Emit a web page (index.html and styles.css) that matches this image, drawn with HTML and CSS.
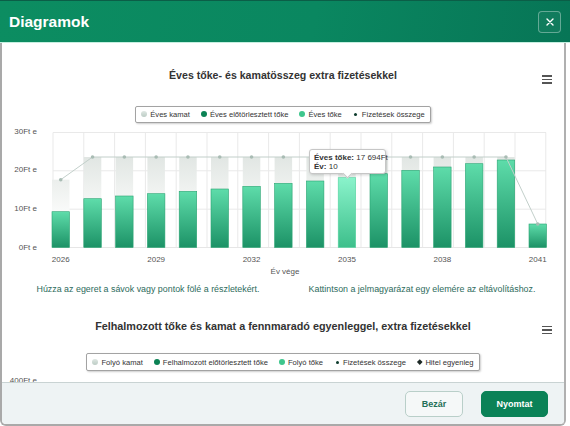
FILE: index.html
```html
<!DOCTYPE html>
<html lang="hu">
<head>
<meta charset="utf-8">
<title>Diagramok</title>
<link rel="stylesheet" href="styles.css">
</head>
<body>
<div class="modal">
  <header class="modal-header">
    <h1>Diagramok</h1>
    <button class="close" aria-label="Bezár">
      <svg width="10" height="10" viewBox="0 0 10 10"><path d="M2 2 L8 8 M8 2 L2 8" stroke="#fff" stroke-width="1.4" stroke-linecap="round" fill="none"/></svg>
    </button>
  </header>
  <div class="modal-frame">
    <main class="modal-body">
      <section class="chart chart-1">
        <div class="chart-head">
          <h2>Éves tőke- és kamatösszeg extra fizetésekkel</h2>
          <span class="menu"><i></i><i></i><i></i></span>
        </div>
        <div class="legend">
          <span class="li"><i class="sym sym-kamat"></i>Éves kamat</span>
          <span class="li"><i class="sym sym-elo"></i>Éves előtörlesztett tőke</span>
          <span class="li"><i class="sym sym-toke"></i>Éves tőke</span>
          <span class="li"><i class="sym sym-dot"></i>Fizetések összege</span>
        </div>
        <div class="plot">
          <svg class="plot-svg" width="562" height="152" viewBox="2 124 562 152">
            <defs>
              <linearGradient id="gb" x1="0" y1="0" x2="0" y2="1"><stop offset="0" stop-color="#5edcaa"/><stop offset="1" stop-color="#1c9266"/></linearGradient>
              <linearGradient id="gh" x1="0" y1="0" x2="0" y2="1"><stop offset="0" stop-color="#8af3cb"/><stop offset="1" stop-color="#3dbf8b"/></linearGradient>
              <linearGradient id="gk" gradientUnits="userSpaceOnUse" x1="0" y1="156" x2="0" y2="212"><stop offset="0" stop-color="#e1e6e3"/><stop offset="1" stop-color="#fafbfa"/></linearGradient>
            </defs>
            <g stroke="#e9e9e9" stroke-width="1" fill="none">
              <path d="M53 131.5H546M53 169.8H546M53 208.2H546"/>
              <path d="M53 131.5V246.5M83.8 131.5V246.5M114.6 131.5V246.5M145.4 131.5V246.5M176.2 131.5V246.5M207 131.5V246.5M237.8 131.5V246.5M268.6 131.5V246.5M299.4 131.5V246.5M330.2 131.5V246.5M361 131.5V246.5M391.8 131.5V246.5M422.6 131.5V246.5M453.4 131.5V246.5M484.2 131.5V246.5M515 131.5V246.5M545.8 131.5V246.5"/>
            </g>
            <g fill="url(#gk)">
              <rect x="52" y="178.7" width="17.5" height="32"/>
              <rect x="83.8" y="156" width="17.5" height="41.7"/>
              <rect x="115.6" y="156" width="17.5" height="39"/>
              <rect x="147.4" y="156" width="17.5" height="36.7"/>
              <rect x="179.2" y="156" width="17.5" height="34.3"/>
              <rect x="211" y="156" width="17.5" height="32"/>
              <rect x="242.8" y="156" width="17.5" height="29.3"/>
              <rect x="274.6" y="156" width="17.5" height="26.3"/>
              <rect x="306.4" y="156" width="17.5" height="24"/>
              <rect x="338.2" y="156" width="17.5" height="20.7"/>
              <rect x="370" y="156" width="17.5" height="16.7"/>
              <rect x="401.8" y="156" width="17.5" height="13.3"/>
              <rect x="433.6" y="156" width="17.5" height="10"/>
              <rect x="465.4" y="156" width="17.5" height="6.7"/>
              <rect x="497.2" y="156" width="17.5" height="3"/>
            </g>
            <path d="M53 246.5H546" stroke="#e6e6e6" stroke-width="1"/>
            <g fill="url(#gb)" stroke="#2aa472" stroke-width="0.6">
              <rect x="52" y="210.7" width="17.5" height="35.8"/>
              <rect x="83.8" y="197.7" width="17.5" height="48.8"/>
              <rect x="115.6" y="195" width="17.5" height="51.5"/>
              <rect x="147.4" y="192.7" width="17.5" height="53.8"/>
              <rect x="179.2" y="190.3" width="17.5" height="56.2"/>
              <rect x="211" y="188" width="17.5" height="58.5"/>
              <rect x="242.8" y="185.3" width="17.5" height="61.2"/>
              <rect x="274.6" y="182.3" width="17.5" height="64.2"/>
              <rect x="306.4" y="180" width="17.5" height="66.5"/>
              <rect x="338.2" y="176.7" width="17.5" height="69.8" fill="url(#gh)" stroke="#55d39f"/>
              <rect x="370" y="172.7" width="17.5" height="73.8"/>
              <rect x="401.8" y="169.3" width="17.5" height="77.2"/>
              <rect x="433.6" y="166" width="17.5" height="80.5"/>
              <rect x="465.4" y="162.7" width="17.5" height="83.8"/>
              <rect x="497.2" y="159" width="17.5" height="87.5"/>
              <rect x="529" y="223" width="17.5" height="23.5"/>
            </g>
            <polyline fill="none" stroke="#c2cfca" stroke-width="1" points="60.75,178.7 92.55,156 124.35,156 156.15,156 187.95,156 219.75,156 251.55,156 283.35,156 315.15,156 346.95,156 378.75,156 410.55,156 442.35,156 474.15,156 505.95,156 537.75,223"/>
            <g fill="#a9bcb4">
              <circle cx="60.75" cy="178.7" r="1.8"/><circle cx="92.55" cy="156" r="1.8"/><circle cx="124.35" cy="156" r="1.8"/><circle cx="156.15" cy="156" r="1.8"/>
              <circle cx="187.95" cy="156" r="1.8"/><circle cx="219.75" cy="156" r="1.8"/><circle cx="251.55" cy="156" r="1.8"/><circle cx="283.35" cy="156" r="1.8"/>
              <circle cx="315.15" cy="156" r="1.8"/><circle cx="346.95" cy="156" r="1.8"/><circle cx="378.75" cy="156" r="1.8"/><circle cx="410.55" cy="156" r="1.8"/>
              <circle cx="442.35" cy="156" r="1.8"/><circle cx="474.15" cy="156" r="1.8"/><circle cx="505.95" cy="156" r="1.8"/><circle cx="537.75" cy="223" r="1.8"/>
            </g>
            <g class="axis-text" text-anchor="end">
              <text x="37" y="132.5">30Ft e</text>
              <text x="37" y="170.8">20Ft e</text>
              <text x="37" y="209.6">10Ft e</text>
              <text x="37" y="249">0Ft e</text>
            </g>
            <g class="axis-text" text-anchor="middle">
              <text x="60.75" y="261">2026</text>
              <text x="156.15" y="261">2029</text>
              <text x="251.55" y="261">2032</text>
              <text x="346.95" y="261">2035</text>
              <text x="442.35" y="261">2038</text>
              <text x="537.75" y="261">2041</text>
              <text x="285" y="273">Év vége</text>
            </g>
          </svg>
          <div class="tooltip">
            <div><b>Éves tőke:</b> 17 694Ft</div>
            <div><b>Év:</b> 10</div>
          </div>
        </div>
      </section>
      <div class="hints">
        <p>Húzza az egeret a sávok vagy pontok fölé a részletekért.</p>
        <p>Kattintson a jelmagyarázat egy elemére az eltávolításhoz.</p>
      </div>
      <section class="chart chart-2">
        <div class="chart-head">
          <h2>Felhalmozott tőke és kamat a fennmaradó egyenleggel, extra fizetésekkel</h2>
          <span class="menu"><i></i><i></i><i></i></span>
        </div>
        <div class="legend legend-2">
          <span class="li"><i class="sym sym-kamat"></i>Folyó kamat</span>
          <span class="li"><i class="sym sym-elo"></i>Felhalmozott előtörlesztett tőke</span>
          <span class="li"><i class="sym sym-toke"></i>Folyó tőke</span>
          <span class="li"><i class="sym sym-dot"></i>Fizetések összege</span>
          <span class="li"><i class="sym sym-diamond"></i>Hitel egyenleg</span>
        </div>
        <div class="plot plot-2">
          <svg width="562" height="50" viewBox="2 374 562 50">
            <path d="M53 385.5H546" stroke="#e9e9e9" stroke-width="1"/>
            <text class="axis-text" x="37" y="385.5" text-anchor="end">400Ft e</text>
          </svg>
        </div>
      </section>
    </main>
    <footer class="modal-footer">
      <button class="btn btn-ghost">Bezár</button>
      <button class="btn btn-primary">Nyomtat</button>
    </footer>
  </div>
</div>
</body>
</html>
```

FILE: styles.css
```css
* { box-sizing: border-box; }
html, body { margin: 0; padding: 0; background: #fff; }
body {
  width: 570px;
  height: 426px;
  overflow: hidden;
  font-family: "Liberation Sans", Arial, Helvetica, sans-serif;
}
.modal {
  width: 570px;
  height: 426px;
  display: flex;
  flex-direction: column;
}
.modal-header {
  height: 43px;
  flex: none;
  display: flex;
  align-items: center;
  justify-content: space-between;
  padding: 0 9px;
  background: linear-gradient(100deg, #0c8d61 0%, #0a8760 55%, #077556 100%);
  border-top: 1px solid #0b5e47;
  border-bottom: 1px solid #c6efe0;
}
.modal-header h1 {
  margin: 0;
  font-size: 15.5px;
  font-weight: 700;
  color: #fff;
}
.close {
  width: 23px;
  height: 22px;
  padding: 0;
  border: 1px solid rgba(255, 255, 255, 0.35);
  border-radius: 4px;
  background: rgba(255, 255, 255, 0.04);
  display: flex;
  align-items: center;
  justify-content: center;
}
.modal-frame {
  flex: 1;
  min-height: 0;
  width: 566px;
  display: flex;
  flex-direction: column;
  border-left: 2px solid #a9a9a9;
  border-right: 2px solid #b0b0b0;
  border-bottom: 2px solid #a9a9a9;
  border-radius: 0 0 6px 6px;
  overflow: hidden;
}
.modal-body {
  flex: 1;
  min-height: 0;
  overflow: hidden;
  background: #fff;
}
.chart-head {
  display: grid;
  grid-template-columns: 1fr auto 1fr;
  padding-top: 25px;
}
.chart-head h2 {
  grid-column: 2;
  margin: 0;
  font-size: 10.6px;
  line-height: 14px;
  font-weight: 700;
  color: #333;
  white-space: nowrap;
}
.chart-2 .chart-head { padding-top: 24px; }
.chart-2 .chart-head h2 { font-size: 10.8px; }
.menu {
  grid-column: 3;
  justify-self: end;
  align-self: start;
  margin: 7px 12px 0 0;
  display: flex;
  flex-direction: column;
  gap: 2px;
  width: 10px;
}
.menu i {
  display: block;
  height: 1.5px;
  background: #555;
}
.legend {
  display: flex;
  align-items: center;
  gap: 11px;
  width: max-content;
  height: 17px;
  margin: 22px auto 0;
  padding: 0 5px;
  border: 1px solid #a3a3a3;
  border-radius: 2px;
  box-shadow: 1px 1px 2px rgba(0, 0, 0, 0.2);
  background: #fff;
  font-size: 7.6px;
  color: #333;
}
.legend-2 {
  height: 18px;
  margin-top: 19px;
}
.li {
  display: flex;
  align-items: center;
  gap: 3px;
  white-space: nowrap;
}
.sym {
  display: block;
  width: 6px;
  height: 6px;
  border-radius: 50%;
}
.sym-kamat { background: linear-gradient(#dfe7e3, #bcccc5); }
.sym-elo { background: #0b8254; }
.sym-toke { background: #3ec68d; }
.sym-dot {
  width: 3px;
  height: 3px;
  margin: 0 1.5px;
  background: #0d3b2c;
}
.sym-diamond {
  width: 3.5px;
  height: 3.5px;
  margin: 0 1px;
  border-radius: 0;
  background: #1e2a26;
  transform: rotate(45deg);
}
.plot {
  position: relative;
  height: 152px;
  margin-top: 2px;
}
.plot svg { display: block; }
.axis-text {
  font-family: "Liberation Sans", Arial, sans-serif;
  font-size: 8px;
  fill: #555;
}
.tooltip {
  position: absolute;
  left: 307px;
  top: 24px;
  width: 77px;
  height: 25px;
  padding: 3px 4px;
  background: #fff;
  border: 1px solid #c6c6c6;
  border-radius: 3px;
  box-shadow: 1px 1px 3px rgba(0, 0, 0, 0.18);
  font-size: 8px;
  line-height: 9.5px;
  color: #333;
  white-space: nowrap;
}
.tooltip::after {
  content: "";
  position: absolute;
  left: 34px;
  bottom: -4px;
  width: 6px;
  height: 6px;
  background: #fff;
  border-right: 1px solid #c6c6c6;
  border-bottom: 1px solid #c6c6c6;
  transform: rotate(45deg);
}
.hints {
  display: grid;
  grid-template-columns: 1fr 1fr;
  margin-top: 6px;
}
.hints p {
  margin: 0;
  font-size: 8.9px;
  line-height: 12px;
  color: #2d6b5c;
  text-align: center;
  white-space: nowrap;
}
.hints p:first-child { padding-left: 11px; }
.hints p:last-child { padding-right: 3px; }
.plot-2 {
  height: 50px;
  margin-top: 0;
}
.modal-footer {
  height: 42px;
  flex: none;
  display: flex;
  align-items: center;
  justify-content: flex-end;
  gap: 18px;
  padding-right: 16px;
  background: #eef3f4;
  border-top: 1px solid #c9d3d3;
}
.btn {
  height: 26px;
  border-radius: 5px;
  font-family: "Liberation Sans", Arial, sans-serif;
  font-size: 9px;
  font-weight: 700;
  padding: 0;
}
.btn-ghost {
  width: 58px;
  background: #f5f8f8;
  border: 1px solid #b9cfc9;
  color: #1f6f57;
}
.btn-primary {
  width: 67px;
  background: #0b8257;
  border: 1px solid #0b8257;
  color: #fff;
}
```
